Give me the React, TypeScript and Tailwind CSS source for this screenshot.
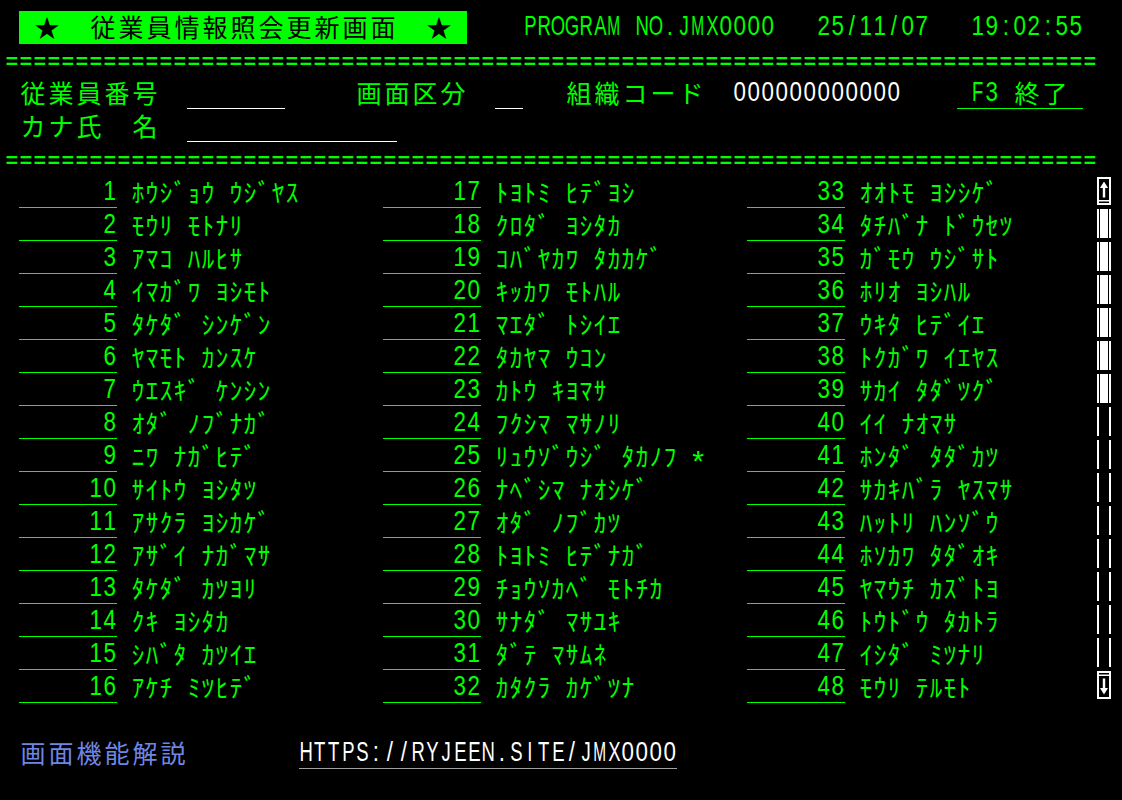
import React from "react";

type Seg = {
  col: number;
  text?: string;
  cls?: string;
  eq?: boolean;
  node?: React.ReactNode;
  w?: number;
};

const isWide = (ch: string) => {
  const c = ch.codePointAt(0) || 0;
  if (c >= 0xff61 && c <= 0xff9f) return false;
  if (ch === "★") return true;
  return c >= 0x2e80;
};

const strWidth = (s: string) =>
  Array.from(s).reduce((a, ch) => a + (isWide(ch) ? 2 : 1), 0);

function Glyph({ ch, eq }: { ch: string; eq?: boolean }) {
  const code = ch.charCodeAt(0);
  if (ch === " " || ch === "　") return <>{ch}</>;
  if (eq && ch === "=") {
    return (
      <span className="inline-block translate-y-[1px] font-['Liberation_Sans',sans-serif] text-[21px] font-bold leading-none">
        =
      </span>
    );
  }
  if (ch === "*") {
    return (
      <span className="inline-block translate-y-[6px] font-['Liberation_Sans',sans-serif] text-[30px] leading-none">
        *
      </span>
    );
  }
  if (code < 128) {
    if (ch === "M" || ch === "W") {
      return (
        <span className="inline-block scale-x-[0.55] font-['Liberation_Sans',sans-serif] text-[28px] leading-none">
          {ch}
        </span>
      );
    }
    if (ch >= "A" && ch <= "Z") {
      return (
        <span className="inline-block scale-x-[0.66] font-['Liberation_Sans',sans-serif] text-[28px] leading-none">
          {ch}
        </span>
      );
    }
    return (
      <span className="inline-block scale-x-[0.8] font-['Liberation_Sans',sans-serif] text-[28px] leading-none">
        {ch}
      </span>
    );
  }
  return (
    <span className="inline-block font-['Noto_Sans_CJK_JP',sans-serif] text-[25px] leading-none">
      {ch}
    </span>
  );
}

function Cells({ text, eq }: { text: string; eq?: boolean }) {
  return (
    <>
      {Array.from(text).map((ch, i) =>
        isWide(ch) ? (
          <span key={i} className="flex h-[30px] w-[28px] shrink-0 items-center justify-center">
            <Glyph ch={ch} eq={eq} />
          </span>
        ) : (
          <span key={i} className="flex h-[30px] w-[14px] shrink-0 items-center justify-center">
            <Glyph ch={ch} eq={eq} />
          </span>
        )
      )}
    </>
  );
}

const GREEN = "h-[32px] text-[#00ff00]";
const GREEN_U = "h-[32px] border-b border-[#00ff00] text-[#00ff00]";
const WHITE_U = "h-[32px] border-b border-white text-white";

function Row({ segs }: { segs: Seg[] }) {
  const out: React.ReactNode[] = [];
  let cur = 0;
  segs.forEach((s, i) => {
    if (s.col > cur) {
      out.push(
        <span key={"g" + i} className="flex h-[32px] shrink-0">
          <Cells text={" ".repeat(s.col - cur)} />
        </span>
      );
    }
    if (s.node) {
      out.push(
        <span key={i} className="flex shrink-0">
          {s.node}
        </span>
      );
      cur = s.col + (s.w || 1);
    } else {
      const t = s.text || "";
      out.push(
        <span key={i} className={`flex shrink-0 ${s.cls ?? GREEN}`}>
          <Cells text={t} eq={s.eq} />
        </span>
      );
      cur = s.col + strWidth(t);
    }
  });
  return <div className="flex h-[33px] items-start">{out}</div>;
}

const names: string[] = [
  "ﾎｳｼﾞｮｳ ｳｼﾞﾔｽ",
  "ﾓｳﾘ ﾓﾄﾅﾘ",
  "ｱﾏｺ ﾊﾙﾋｻ",
  "ｲﾏｶﾞﾜ ﾖｼﾓﾄ",
  "ﾀｹﾀﾞ ｼﾝｹﾞﾝ",
  "ﾔﾏﾓﾄ ｶﾝｽｹ",
  "ｳｴｽｷﾞ ｹﾝｼﾝ",
  "ｵﾀﾞ ﾉﾌﾞﾅｶﾞ",
  "ﾆﾜ ﾅｶﾞﾋﾃﾞ",
  "ｻｲﾄｳ ﾖｼﾀﾂ",
  "ｱｻｸﾗ ﾖｼｶｹﾞ",
  "ｱｻﾞｲ ﾅｶﾞﾏｻ",
  "ﾀｹﾀﾞ ｶﾂﾖﾘ",
  "ｸｷ ﾖｼﾀｶ",
  "ｼﾊﾞﾀ ｶﾂｲｴ",
  "ｱｹﾁ ﾐﾂﾋﾃﾞ",
  "ﾄﾖﾄﾐ ﾋﾃﾞﾖｼ",
  "ｸﾛﾀﾞ ﾖｼﾀｶ",
  "ｺﾊﾞﾔｶﾜ ﾀｶｶｹﾞ",
  "ｷｯｶﾜ ﾓﾄﾊﾙ",
  "ﾏｴﾀﾞ ﾄｼｲｴ",
  "ﾀｶﾔﾏ ｳｺﾝ",
  "ｶﾄｳ ｷﾖﾏｻ",
  "ﾌｸｼﾏ ﾏｻﾉﾘ",
  "ﾘｭｳｿﾞｳｼﾞ ﾀｶﾉﾌ *",
  "ﾅﾍﾞｼﾏ ﾅｵｼｹﾞ",
  "ｵﾀﾞ ﾉﾌﾞｶﾂ",
  "ﾄﾖﾄﾐ ﾋﾃﾞﾅｶﾞ",
  "ﾁｮｳｿｶﾍﾞ ﾓﾄﾁｶ",
  "ｻﾅﾀﾞ ﾏｻﾕｷ",
  "ﾀﾞﾃ ﾏｻﾑﾈ",
  "ｶﾀｸﾗ ｶｹﾞﾂﾅ",
  "ｵｵﾄﾓ ﾖｼｼｹﾞ",
  "ﾀﾁﾊﾞﾅ ﾄﾞｳｾﾂ",
  "ｶﾞﾓｳ ｳｼﾞｻﾄ",
  "ﾎﾘｵ ﾖｼﾊﾙ",
  "ｳｷﾀ ﾋﾃﾞｲｴ",
  "ﾄｸｶﾞﾜ ｲｴﾔｽ",
  "ｻｶｲ ﾀﾀﾞﾂｸﾞ",
  "ｲｲ ﾅｵﾏｻ",
  "ﾎﾝﾀﾞ ﾀﾀﾞｶﾂ",
  "ｻｶｷﾊﾞﾗ ﾔｽﾏｻ",
  "ﾊｯﾄﾘ ﾊﾝｿﾞｳ",
  "ﾎｿｶﾜ ﾀﾀﾞｵｷ",
  "ﾔﾏｳﾁ ｶｽﾞﾄﾖ",
  "ﾄｳﾄﾞｳ ﾀｶﾄﾗ",
  "ｲｼﾀﾞ ﾐﾂﾅﾘ",
  "ﾓｳﾘ ﾃﾙﾓﾄ",
];

function ScrollUp() {
  return (
    <div className="mt-[1px] h-[28px] w-[14px] border-2 border-white">
      <svg viewBox="0 0 10 24" className="block h-[24px] w-[10px]">
        <path d="M5 2.5 L9 9 H6.2 V18.5 H3.8 V9 H1 Z" fill="#ffffff" />
        <rect x="0" y="21" width="10" height="1.5" fill="#ffffff" />
      </svg>
    </div>
  );
}

function ScrollDown() {
  return (
    <div className="h-[28px] w-[14px] border-2 border-white">
      <svg viewBox="0 0 10 24" className="block h-[24px] w-[10px]">
        <rect x="0" y="1.5" width="10" height="1.5" fill="#ffffff" />
        <path d="M3.8 5.5 H6.2 V15 H9 L5 21.5 L1 15 H3.8 Z" fill="#ffffff" />
      </svg>
    </div>
  );
}

function ScrollFilled() {
  return (
    <div className="flex h-[29px] w-[14px] border-x-2 border-white px-[1px]">
      <div className="flex-1 bg-white" />
    </div>
  );
}

function ScrollEmpty() {
  return <div className="h-[29px] w-[14px] border-x-2 border-white" />;
}

export default function App() {
  const eqLine = "=".repeat(78);
  const dataRows = Array.from({ length: 16 }, (_, r) => {
    const segs: Seg[] = [];
    for (let g = 0; g < 3; g++) {
      const n = g * 16 + r + 1;
      segs.push({ col: 1 + 26 * g, text: String(n).padStart(7, " "), cls: GREEN_U });
      segs.push({ col: 9 + 26 * g, text: names[n - 1], cls: GREEN });
    }
    let sb: React.ReactNode;
    if (r === 0) sb = <ScrollUp />;
    else if (r === 15) sb = <ScrollDown />;
    else if (r <= 6) sb = <ScrollFilled />;
    else sb = <ScrollEmpty />;
    segs.push({ col: 78, node: sb, w: 1 });
    return segs;
  });

  return (
    <div className="h-[800px] w-full overflow-hidden bg-black pl-[5px] pt-[11px]">
      <Row
        segs={[
          { col: 1, text: " ★　従業員情報照会更新画面　★ ", cls: "h-[33px] bg-[#00ff00] text-black" },
          { col: 37, text: "PROGRAM NO.JMX0000" },
          { col: 58, text: "25/11/07" },
          { col: 69, text: "19:02:55" },
        ]}
      />
      <Row segs={[{ col: 0, text: eqLine, eq: true }]} />
      <Row
        segs={[
          { col: 1, text: "従業員番号" },
          { col: 13, text: "       ", cls: WHITE_U },
          { col: 25, text: "画面区分" },
          { col: 35, text: "  ", cls: WHITE_U },
          { col: 40, text: "組織コード" },
          { col: 52, text: "000000000000", cls: "h-[32px] text-white" },
          { col: 68, text: " F3 終了 ", cls: GREEN_U },
        ]}
      />
      <Row
        segs={[
          { col: 1, text: "カナ氏　名" },
          { col: 13, text: "               ", cls: WHITE_U },
        ]}
      />
      <Row segs={[{ col: 0, text: eqLine, eq: true }]} />
      {dataRows.map((segs, i) => (
        <Row key={i} segs={segs} />
      ))}
      <Row segs={[]} />
      <Row
        segs={[
          { col: 1, text: "画面機能解説", cls: "h-[32px] text-[#6f86e4]" },
          { col: 21, text: "HTTPS://RYJEEN.SITE/JMX0000", cls: "h-[32px] border-b border-[#a0a0a0] text-white" },
        ]}
      />
    </div>
  );
}
